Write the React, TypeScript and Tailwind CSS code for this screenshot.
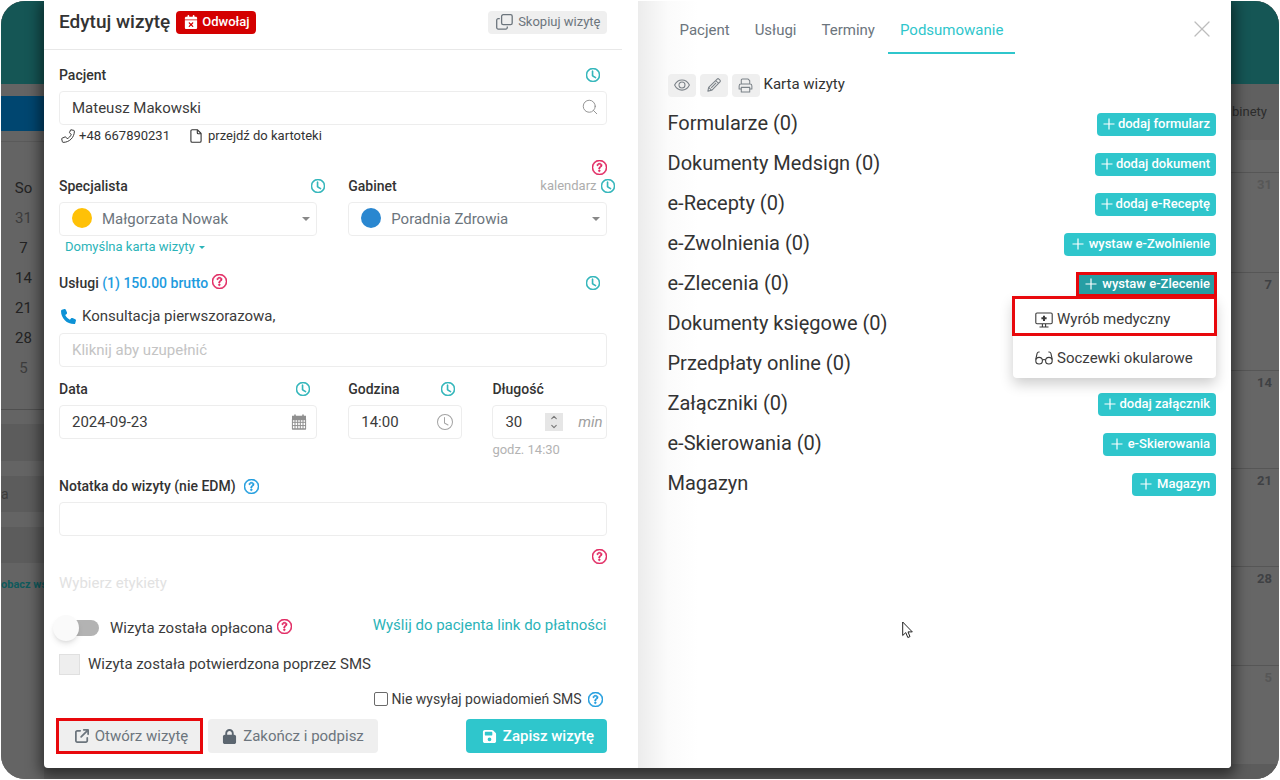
import React from "react";
import { BsClock, BsQuestionCircle } from "react-icons/bs";
import { FaCalendarXmark, FaArrowUpRightFromSquare, FaLock, FaFloppyDisk, FaPhone } from "react-icons/fa6";
import { Search, X, ChevronUp, ChevronDown } from "lucide-react";

const CloneIcon = () => (
  <svg viewBox="0 0 17 16" className="h-4 w-[17px]" fill="none" stroke="currentColor" strokeWidth="1.3">
    <rect x="5.6" y="0.7" width="10.6" height="10" rx="1.6" />
    <path d="M3.8 4.7H2.2A1.5 1.5 0 0 0 .7 6.2v7.4a1.5 1.5 0 0 0 1.5 1.5h7.6a1.5 1.5 0 0 0 1.5-1.5v-1" />
  </svg>
);

const PlusIcon = () => (
  <svg viewBox="0 0 12 12" className="size-3" fill="none" stroke="currentColor" strokeWidth="1.2">
    <path d="M6 .5v11M.5 6h11" />
  </svg>
);

const PhoneOutline = () => (
  <svg viewBox="0 0 16 16" className="size-3.5" fill="none" stroke="currentColor" strokeWidth="1.1" strokeLinejoin="round">
    <path d="M11.4.9 14.6 1.600c.4.1.7.4.7.8C15.300 9.700 9.500 15.300 2.400 15.300c-.4 0-.7-.3-.8-.7L.8 11.400c-.1-.4.1-.8.5-.9l3.400-1.500c.3-.1.7 0 .9.3l1.400 1.800c2.300-1.100 3.800-2.600 4.800-4.900L10 4.800c-.3-.2-.4-.6-.2-.9l1.100-2.700c.1-.3.3-.4.5-.3Z" />
  </svg>
);

const FileOutline = () => (
  <svg viewBox="0 0 12 14" className="h-3.5 w-3" fill="none" stroke="currentColor" strokeWidth="1.1" strokeLinejoin="round">
    <path d="M7.300.7H2.200C1.400.7.9 1.200.9 2v10c0 .8.5 1.300 1.300 1.300h7.600c.8 0 1.300-.5 1.300-1.300V4.500L7.300.7Z" />
    <path d="M7.300.9v3c0 .5.300.8.8.8h2.800" />
  </svg>
);

const CalendarGrid = () => (
  <svg viewBox="0 0 16 16" className="size-4 text-[#8f8f8f]" fill="none" stroke="currentColor">
    <path d="M1 3h14M1 5h14" strokeWidth="2.400" />
    <path d="M4 .5v3M12 .5v3" strokeWidth="1.600" />
    <path d="M1.400 5v10h13.200V5M4 6v9M6.700 6v9M9.300 6v9M12 6v9M1 8.300h14M1 11.600h14M1 15h14" strokeWidth="1" />
  </svg>
);

const EyeIcon = () => (
  <svg viewBox="0 0 16 16" className="size-4" fill="none" stroke="currentColor" strokeWidth="1.050">
    <path d="M.6 8C2.200 4.700 4.900 2.900 8 2.900S13.800 4.700 15.400 8c-1.600 3.300-4.300 5.100-7.400 5.100S2.200 11.300.6 8Z" />
    <circle cx="8" cy="8" r="3" />
  </svg>
);

const PencilIcon = () => (
  <svg viewBox="0 0 16 16" className="size-3.5" fill="none" stroke="currentColor" strokeWidth="1.200" strokeLinejoin="round">
    <path d="m1 15 .9-4.400L11.600 1.200c.6-.6 1.400-.6 2 0l1.200 1.200c.6.6.6 1.400 0 2L5.400 14.100 1 15ZM10 2.900 13.100 6M4.800 11.200l5.600-5.600M2 10.700l3.300 3.400" />
  </svg>
);

const PrinterIcon = () => (
  <svg viewBox="0 0 16 16" className="size-[15px]" fill="none" stroke="currentColor" strokeWidth="1.100" strokeLinejoin="round">
    <path d="M3.500 6.500V2.200c0-.7.4-1.100 1.100-1.100h6.200l1.700 1.700v3.700M3.500 11.800H1.200V8.400c0-1.100.7-1.900 1.900-1.900h9.800c1.200 0 1.900.8 1.900 1.900v3.400h-2.300" />
    <path d="M3.500 10h9v4.900h-9z" />
  </svg>
);

const MonitorMedical = () => (
  <svg viewBox="0 0 18 16" className="h-4 w-[18px]" fill="none" stroke="currentColor" strokeWidth="1.100">
    <rect x=".8" y="1" width="16.400" height="10.800" rx="1.200" />
    <path d="M7.400 12v2.600M10.600 12v2.600M4.500 15h9" />
    <path d="M9 3.700v5.200M6.400 6.300h5.200" strokeWidth="2" />
  </svg>
);

const GlassesIcon = () => (
  <svg viewBox="0 0 18 14" className="h-3.5 w-[18px]" fill="none" stroke="currentColor" strokeWidth="1.100">
    <path d="M4.600 1H3.900C2.900 1 2.400 1.500 2.100 2.400L.7 8.700M13.400 1h.7c1 0 1.500.5 1.800 1.400l1.400 6.300M7.400 9.200c.9-1 2.300-1 3.200 0" />
    <circle cx="4.100" cy="9.700" r="3.300" />
    <circle cx="13.900" cy="9.700" r="3.300" />
  </svg>
);

const History = ({ label }: { label: string }) => (
  <button type="button" aria-label={`Historia: ${label}`} className="text-[#2bb3b8]">
    <BsClock className="size-3.5" strokeWidth={0.8} />
  </button>
);

const Help = ({ blue, raised }: { blue?: boolean; raised?: boolean }) => (
  <button type="button" aria-label="Pomoc" className={`${blue ? "text-[#1d9bde]" : "text-[#e0245e]"} ${raised ? "mb-1" : ""}`}>
    <BsQuestionCircle className="size-[15px]" strokeWidth={0.7} />
  </button>
);

const field = "h-[34px] w-full rounded border border-[#ededed] bg-white px-3 text-[15px] text-[#3b3b3b] placeholder:text-[#c4c4c4] outline-none";
const label = "font-medium text-sm text-[#333]";
const labelRow = "mb-1.5 flex h-5 items-center justify-between";

const Picker = ({ id, dot, value }: { id: string; dot: string; value: string }) => (
  <div className="relative">
    <select id={id} className={`${field} appearance-none pl-[42px] text-[#6c757d]`}>
      <option>{value}</option>
    </select>
    <span className={`pointer-events-none absolute left-[13px] top-1.5 size-5 rounded-full ${dot}`} />
    <span className="pointer-events-none absolute right-[7px] top-[15px] border-x-4 border-t-4 border-x-transparent border-t-[#888]" />
  </div>
);

const sections = [
  { title: "Formularze (0)", action: "dodaj formularz" },
  { title: "Dokumenty Medsign (0)", action: "dodaj dokument" },
  { title: "e-Recepty (0)", action: "dodaj e-Receptę" },
  { title: "e-Zwolnienia (0)", action: "wystaw e-Zwolnienie", wide: true },
  { title: "e-Zlecenia (0)", action: "wystaw e-Zlecenie", wide: true, open: true },
  { title: "Dokumenty księgowe (0)" },
  { title: "Przedpłaty online (0)" },
  { title: "Załączniki (0)", action: "dodaj załącznik" },
  { title: "e-Skierowania (0)", action: "e-Skierowania", wide: true },
  { title: "Magazyn", action: "Magazyn", wide: true },
];

const LeftBackdrop = () => (
  <aside className="flex w-[43px] shrink-0 flex-col overflow-hidden bg-[#646464] text-[15px] text-[#3c3c3c]">
    <div className="h-[83px] bg-[#155655]" />
    <div className="mt-3 h-[35px] bg-[#004670]" />
    <div className="mt-2.5 h-px bg-[#5a5a5a]" />
    <div className="mt-[31px] flex flex-col items-center border-b border-[#4f4f4f] pb-[26px] pl-0.5 leading-[30px]">
      <span className="text-[#222]">So</span>
      <span>31</span>
      <span className="text-[#222]">7</span>
      <span className="text-[#222]">14</span>
      <span className="text-[#222]">21</span>
      <span className="text-[#222]">28</span>
      <span>5</span>
    </div>
    <div className="mt-3.5 h-[37px] bg-[#5c5c5c]" />
    <div className="mt-[15px] h-9 bg-[#5c5c5c] text-sm leading-9">a</div>
    <div className="mt-[15px] h-9 bg-[#5c5c5c]" />
    <div className="mt-3 h-5 whitespace-nowrap text-[11px] font-bold leading-5 text-[#0f5a5c]">obacz ws</div>
  </aside>
);

const RightBackdrop = () => (
  <aside className="flex w-12 shrink-0 flex-col overflow-hidden bg-[#666] text-[13px] font-bold text-[#3f4144]">
    <div className="h-[83px] bg-[#155655]" />
    <div className="flex h-14 items-center justify-end bg-[#606060] pr-3 text-[13px] font-normal text-[#2c2c2c]">binety</div>
    <div className="h-8 bg-[#666]" />
    <div className="h-[100px] border-t border-[#565656] pr-[7px] pt-0.5 text-right text-[#575757]">31</div>
    <div className="h-[98px] border-t border-[#565656] pr-[7px] pt-0.5 text-right">7</div>
    <div className="h-[98px] border-t border-[#565656] pr-[7px] pt-0.5 text-right">14</div>
    <div className="h-[98px] border-t border-[#565656] pr-[7px] pt-0.5 text-right">21</div>
    <div className="h-[99px] border-t border-[#565656] pr-[7px] pt-0.5 text-right">28</div>
    <div className="h-[99px] border-t border-[#565656] pr-[7px] pt-0.5 text-right text-[#575757]">5</div>
    <div className="flex-1 bg-[#5c5c5c]" />
  </aside>
);

const VisitForm = () => (
  <form onSubmit={(e) => e.preventDefault()}>
    <header className="mr-4 flex h-[49px] items-center border-b border-[#e8e8e8] pb-1.5 pl-[15px] pr-[15px]">
      <h1 className="text-[19px] font-medium text-[#333]">Edytuj wizytę</h1>
      <button type="button" className="ml-1.5 flex h-[23px] items-center gap-1 rounded bg-[#d40000] pl-2 pr-1.5 text-[13px] font-medium text-white">
        <FaCalendarXmark className="size-3.5" /> Odwołaj
      </button>
      <button type="button" className="ml-auto flex h-[23px] items-center gap-[5px] rounded bg-[#efefef] pl-2 pr-1.5 text-[13px] text-[#6c757d]">
        <CloneIcon /> Skopiuj wizytę
      </button>
    </header>

    <div className="pb-[15px] pl-[15px] pr-[31px] pt-[15px]">
      <div className={`${labelRow} pr-[7px]`}>
        <label htmlFor="patient" className={label}>Pacjent</label>
        <History label="Pacjent" />
      </div>
      <div className="relative">
        <input id="patient" defaultValue="Mateusz Makowski" className={field} />
        <Search className="absolute right-2 top-[7px] size-[18px] text-[#8a8a8a]" strokeWidth={1.2} />
      </div>
      <div className="flex h-[22px] items-center text-[13px] text-[#333]">
        <a href="#tel" className="flex items-center gap-1 pl-0.5"><PhoneOutline />+48 667890231</a>
        <a href="#kartoteka" className="ml-5 flex items-center gap-1.5"><FileOutline />przejdź do kartoteki</a>
      </div>

      <div className="mt-3 flex h-[17px] items-center justify-end"><Help /></div>
      <div className="grid grid-cols-2 gap-x-[31px]">
        <div>
          <div className={`${labelRow} -mr-2`}>
            <label htmlFor="specialist" className={label}>Specjalista</label>
            <History label="Specjalista" />
          </div>
          <Picker id="specialist" dot="bg-[#ffc107]" value="Małgorzata Nowak" />
        </div>
        <div>
          <div className={`${labelRow} -mr-2`}>
            <label htmlFor="room" className={label}>Gabinet</label>
            <span className="flex items-center gap-1 text-[13px] text-[#adadad]">kalendarz <History label="Gabinet" /></span>
          </div>
          <Picker id="room" dot="bg-[#2a87d0]" value="Poradnia Zdrowia" />
        </div>
      </div>
      <button type="button" className="flex h-[22px] items-center gap-1 pl-1.5 text-[13px] text-[#2bb3b8]">
        Domyślna karta wizyty
        <span className="border-x-[3px] border-t-[3px] border-x-transparent border-t-[#2bb3b8]" />
      </button>

      <div className="mt-[15px] flex h-5 items-center justify-between pr-[7px]">
        <div className="flex items-center gap-1">
          <label htmlFor="services" className={label}>Usługi <span className="text-[#1d9bde]">(1) 150.00 brutto</span></label>
          <Help raised />
        </div>
        <History label="Usługi" />
      </div>
      <div className="mt-[13px] mb-[7px] flex h-5 items-center gap-1.5 pl-0.5 text-[15px] text-[#3b3b3b]">
        <FaPhone className="size-[15px] -scale-x-100 rotate-90 text-[#0d92d6]" />
        Konsultacja pierwszorazowa,
      </div>
      <input id="services" placeholder="Kliknij aby uzupełnić" className={field} />

      <div className="mt-3 grid grid-cols-2 gap-x-[31px]">
        <div>
          <div className={`${labelRow} pr-[7px]`}>
            <label htmlFor="date" className={label}>Data</label>
            <History label="Data" />
          </div>
          <div className="relative">
            <input id="date" defaultValue="2024-09-23" className={field} />
            <span className="absolute right-2.5 top-[9px]"><CalendarGrid /></span>
          </div>
        </div>
        <div className="grid grid-cols-2 gap-x-[30px]">
          <div>
            <div className={`${labelRow} pr-[7px]`}>
              <label htmlFor="time" className={label}>Godzina</label>
              <History label="Godzina" />
            </div>
            <div className="relative">
              <input id="time" defaultValue="14:00" className={field} />
              <BsClock className="absolute right-[9px] top-[9px] size-4 text-[#a3a3a3]" />
            </div>
          </div>
          <div>
            <div className={labelRow}>
              <label htmlFor="length" className={label}>Długość</label>
            </div>
            <div className="relative">
              <input id="length" defaultValue="30" className={field} />
              <span className="absolute inset-y-0 right-1 flex items-center gap-[15px] text-[15px] italic text-[#a0a0a0]">
                <span className="flex h-[18px] w-[18px] flex-col items-center justify-center bg-[#e6e6e6] text-[#777]">
                  <ChevronUp className="size-2.5" strokeWidth={3} />
                  <ChevronDown className="size-2.5" strokeWidth={3} />
                </span>
                min
              </span>
            </div>
            <p className="-mb-[22px] text-[13px] leading-[22px] text-[#b3b3b3]">godz. 14:30</p>
          </div>
        </div>
      </div>

      <div className="mb-1.5 mt-[37px] flex h-5 items-center gap-2">
        <label htmlFor="note" className={label}>Notatka do wizyty (nie EDM)</label>
        <Help blue />
      </div>
      <input id="note" className={field} />

      <div className="mt-3 flex h-[17px] items-center justify-end"><Help /></div>
      <p className="mt-2 h-5 text-[15px] leading-5 text-[#e2e2e2]">Wybierz etykiety</p>

      <div className="mt-[17px] flex h-9 items-center justify-between text-[15px] text-[#3b3b3b]">
        <div className="-ml-1.5 flex items-center">
          <input
            id="paid"
            type="checkbox"
            className="relative h-4 w-[46px] appearance-none before:absolute before:inset-y-0 before:left-2 before:right-0 before:rounded-full before:bg-[#b3b3b3] after:absolute after:-top-[5px] after:left-0 after:size-[26px] after:rounded-full after:bg-[#fafafa] after:shadow-md"
          />
          <label htmlFor="paid" className="ml-[11px] mr-1">Wizyta została opłacona</label>
          <Help raised />
        </div>
        <a href="#platnosc" className="pb-1.5 text-[#2bb3b8]">Wyślij do pacjenta link do płatności</a>
      </div>
      <div className="mt-[7px] flex h-[22px] items-center gap-2 text-[15px] text-[#3b3b3b]">
        <input id="confirmed" type="checkbox" disabled className="size-[21px] appearance-none border border-[#e0e0e0] bg-[#eee]" />
        <label htmlFor="confirmed">Wizyta została potwierdzona poprzez SMS</label>
      </div>
      <div className="mt-3.5 flex h-5 items-center justify-end gap-1 pr-1 text-sm text-[#3b3b3b]">
        <input id="nosms" type="checkbox" className="size-3.5 appearance-none rounded-xs border border-[#6a6a6a] bg-white" />
        <label htmlFor="nosms" className="mr-0.5">Nie wysyłaj powiadomień SMS</label>
        <Help blue />
      </div>

      <div className="mt-2.5 flex h-[34px] text-[15px] text-[#6c757d]">
        <button type="button" className="-ml-0.5 flex w-[145px] items-center justify-center gap-1.5 bg-[#efefef] pl-1 outline-[3px] -outline-offset-2 outline-[#e8080c]">
          <FaArrowUpRightFromSquare className="size-3.5" /> Otwórz wizytę
        </button>
        <button type="button" className="ml-1.5 flex w-[170px] items-center justify-center gap-1.5 rounded bg-[#efefef]">
          <FaLock className="size-[15px] text-[#5c6670]" /> Zakończ i podpisz
        </button>
        <button type="submit" className="ml-auto flex w-[141px] items-center justify-center gap-1.5 rounded bg-[#2fc6cc] pl-1 font-medium text-white">
          <FaFloppyDisk className="size-[15px]" /> Zapisz wizytę
        </button>
      </div>
    </div>
  </form>
);

const iconButton = "flex h-[23px] w-7 items-center justify-center rounded-sm bg-[#efefef] text-[#7b8288]";
const menuItem = "flex w-full items-center gap-1 pl-[22px] text-left text-[15px] text-[#3b3b3b]";

const Summary = () => (
  <section className="relative bg-linear-to-r from-[#ececec] via-[#fbfbfb] via-[30px] to-white to-[60px] pl-[30px] pr-[15px]">
    <nav className="flex gap-px text-[15px] text-[#6c757d]">
      {["Pacjent", "Usługi", "Terminy"].map((t) => (
        <button key={t} type="button" className="h-[53px] px-3 pb-0.5 pt-2">{t}</button>
      ))}
      <button type="button" className="h-[53px] border-b-2 border-[#2fc6cc] px-3 pt-2 text-[#2fc6cc]">Podsumowanie</button>
      <button type="button" aria-label="Zamknij" className="ml-auto pt-0.5 text-[#bdbdbd]">
        <X className="size-7" strokeWidth={1.1} />
      </button>
    </nav>
    <div className="mt-[19px] flex h-6 items-center gap-1">
      <button type="button" aria-label="Podgląd" className={iconButton}><EyeIcon /></button>
      <button type="button" aria-label="Edytuj" className={iconButton}><PencilIcon /></button>
      <button type="button" aria-label="Drukuj" className={iconButton}><PrinterIcon /></button>
      <span className="pb-0.5 text-[15px] text-[#333]">Karta wizyty</span>
    </div>
    <ul className="mt-[7px]">
      {sections.map((s) => (
        <li key={s.title} className="flex h-10 items-center justify-between">
          <h2 className="pb-0.5 text-xl text-[#333]">{s.title}</h2>
          {s.action && (
            <div className="relative">
              <button
                type="button"
                className={`flex h-[23px] items-center pr-1.5 text-[13px] font-medium text-white ${s.wide ? "gap-[5px] pl-2" : "gap-[3px] pl-1.5"} ${s.open ? "bg-[#279ea4] outline-[3px] -outline-offset-2 outline-[#e8080c]" : "rounded-sm bg-[#2fc6cc]"}`}
              >
                <PlusIcon />
                {s.action}
              </button>
              {s.open && (
                <div className="absolute right-0 top-6 z-10 w-[203px] rounded-sm bg-white shadow-[0_6px_14px_rgba(0,0,0,0.2)]">
                  <button type="button" className={`${menuItem} h-[38px] pt-2 outline-[3px] -outline-offset-2 outline-[#e8080c]`}>
                    <MonitorMedical /> Wyrób medyczny
                  </button>
                  <button type="button" className={`${menuItem} h-[43px] pt-1`}>
                    <GlassesIcon /> Soczewki okularowe
                  </button>
                </div>
              )}
            </div>
          )}
        </li>
      ))}
    </ul>
    <svg viewBox="0 0 12 18" className="absolute left-[264px] top-[620px] h-[18px] w-3" fill="#fff" stroke="#222" strokeWidth="1">
      <path d="M.7 1v13.500l3.100-2.900 2 4.900 2.200-.9-2-4.700h4.300L.7 1Z" />
    </svg>
  </section>
);

export default function App() {
  return (
    <div className="min-h-screen bg-white p-px font-[Roboto,'Noto_Sans',sans-serif]">
      <div className="flex overflow-hidden rounded-3xl bg-[#5c5c5c]">
        <LeftBackdrop />
        <main className="relative z-10 mb-[11px] grid flex-1 grid-cols-2 overflow-hidden rounded-b bg-white shadow-[0_4px_14px_4px_rgba(0,0,0,0.5)]">
          <VisitForm />
          <Summary />
        </main>
        <RightBackdrop />
      </div>
    </div>
  );
}
